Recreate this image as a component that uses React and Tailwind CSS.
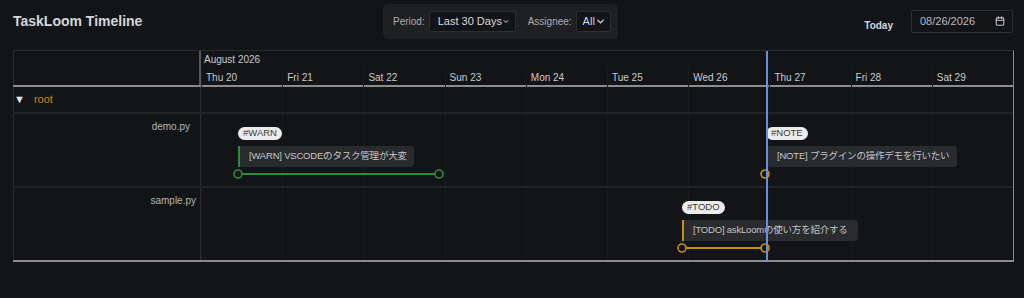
import React from 'react';
import { ChevronDown, Calendar } from 'lucide-react';

const days = ['Thu 20', 'Fri 21', 'Sat 22', 'Sun 23', 'Mon 24', 'Tue 25', 'Wed 26', 'Thu 27', 'Fri 28', 'Sat 29'];

const rows = [
  {
    name: 'demo.py',
    pad: 'pr-[10px]',
    tasks: [
      { tag: '#WARN', text: '[WARN] VSCODEのタスク管理が大変', x: 37, w: 176, end: 238, color: '#2e8b3e' },
      { tag: '#NOTE', text: '[NOTE] プラグインの操作デモを行いたい', x: 565, w: 191, end: 564, color: '#c8900f', start: 564 },
    ],
  },
  {
    name: 'sample.py',
    pad: 'pr-[4px]',
    tasks: [
      { tag: '#TODO', text: '[TODO] askLoomの使い方を紹介する', x: 481, w: 176, end: 564, color: '#c8900f' },
    ],
  },
];

const TODAY_X = 564;

const DayGrid = () => (
  <div className="absolute inset-0 grid grid-cols-10 pointer-events-none">
    {days.map((d) => (
      <div key={d} className="border-l border-[#1a1b1e]" />
    ))}
  </div>
);

const Task = ({ t }) => {
  const start = t.start ?? t.x;
  return (
    <>
      <div
        className="absolute top-[13px] h-[13px] rounded-full bg-[#ececec] text-[#3a3a3a] text-[9.5px] px-[5px] flex items-center justify-center"
        style={{ left: t.x }}
      >
        {t.tag}
      </div>
      <div
        className="absolute top-[32px] h-[21px] bg-[#2a2b2e] rounded-r-[3px] border-l-2 text-[9.5px] tracking-[-0.2px] text-[#c4c6c9] pl-[9px] flex items-center whitespace-nowrap overflow-hidden"
        style={{ left: t.x, width: t.w, borderColor: t.color }}
      >
        {t.text}
      </div>
      <svg className="absolute top-[54px] overflow-visible" style={{ left: 0 }} width="1" height="12">
        {t.end > start && (
          <line x1={start} y1="6" x2={t.end} y2="6" stroke={t.color} strokeWidth="2" />
        )}
        <circle cx={start} cy="6" r="4" fill="#131417" stroke={t.color} strokeWidth="1.6" />
        {t.end > start && <circle cx={t.end} cy="6" r="4" fill="#131417" stroke={t.color} strokeWidth="1.6" />}
      </svg>
    </>
  );
};

export default function App() {
  return (
    <div className="w-[1024px] h-[298px] bg-[#131417] text-[#c8c8c8] overflow-hidden" style={{ fontFamily: '"Liberation Sans", "Noto Sans CJK JP", sans-serif' }}>
      {/* Top bar */}
      <div className="flex items-center h-[41px] pl-[13px] pr-[11px] pt-[1px]">
        <h1 className="text-[14px] font-bold text-[#d4d7da] w-[370px]">TaskLoom Timeline</h1>
        <div className="flex items-center h-[35px] w-[235px] bg-[#1f2023] rounded-[5px] px-[10px] gap-[4px] whitespace-nowrap">
          <span className="text-[10px] text-[#a9adb2]">Period:</span>
          <div className="flex items-center justify-between w-[87px] h-[21px] bg-[#131417] border border-[#2e2f33] rounded-[2px] pl-[8px] pr-[5px] text-[11px] text-[#d8d8d8]">
            Last 30 Days
            <ChevronDown size={11} strokeWidth={3} />
          </div>
          <span className="text-[10px] text-[#a9adb2] ml-[8px]">Assignee:</span>
          <div className="flex items-center justify-between w-[37px] h-[21px] bg-[#131417] border border-[#2e2f33] rounded-[2px] pl-[6px] pr-[4px] text-[11px] text-[#d8d8d8]">
            All
            <ChevronDown size={11} strokeWidth={3} />
          </div>
        </div>
        <div className="flex-1" />
        <span className="text-[10px] font-bold text-[#d4d7da] mt-[9px] mr-[18px]">Today</span>
        <div className="flex items-center justify-between w-[102px] h-[23px] bg-[#131417] border border-[#2e2f33] rounded-[2px] pl-[8px] pr-[7px] text-[11px] text-[#b8bcc0]">
          08/26/2026
          <Calendar size={10} strokeWidth={2.5} className="text-[#c8c8c8]" />
        </div>
      </div>

      {/* Timeline table */}
      <div className="ml-[13px] mt-[9px] w-[1001px] border-t border-[#2a2b2e] border-r border-r-[#8a8a8a] relative">
        {/* header */}
        <div className="flex h-[36px] border-b-2 border-[#8c8c8c]">
          <div className="w-[188px] border-l border-[#2a2b2e] border-r-2 border-r-[#55575a]" />
          <div className="flex-1 relative">
            <div className="h-[17px] pl-[3px] text-[10px] leading-[17px] text-[#c8cbce]">August 2026</div>
            <div className="grid grid-cols-10 h-[19px]">
              {days.map((d) => (
                <div key={d} className="pl-[4px] text-[10px] leading-[19px] text-[#c8cbce] border-l border-[#1a1b1e]">
                  {d}
                </div>
              ))}
            </div>
          </div>
        </div>

        {/* root row */}
        <div className="flex h-[27px] border-b-2 border-[#222326]">
          <div className="w-[188px] border-l border-[#2a2b2e] border-r border-r-[#2a2b2e] flex items-center">
            <span className="text-[11px] text-[#e6e6e6]">▼</span>
            <span className="text-[11px] text-[#c8870a] ml-[9px]">root</span>
          </div>
          <div className="flex-1 relative">
            <DayGrid />
          </div>
        </div>

        {rows.map((r, i) => (
          <div
            key={r.name}
            className={`flex h-[74px] ${i === rows.length - 1 ? 'border-b-2 border-[#8c8c8c]' : 'border-b-2 border-[#222326]'}`}
          >
            <div className={`w-[188px] border-l border-[#2a2b2e] border-r border-r-[#2a2b2e] text-right text-[10px] text-[#aeb6be] pt-[5px] ${r.pad}`}>
              {r.name}
            </div>
            <div className="flex-1 relative">
              <DayGrid />
              {r.tasks.map((t) => (
                <Task key={t.tag} t={t} />
              ))}
            </div>
          </div>
        ))}

        {/* today marker */}
        <div className="absolute top-0 bottom-0 w-[1.5px] bg-[#6b8ee0]" style={{ left: 189 + TODAY_X }} />
      </div>
    </div>
  );
}
